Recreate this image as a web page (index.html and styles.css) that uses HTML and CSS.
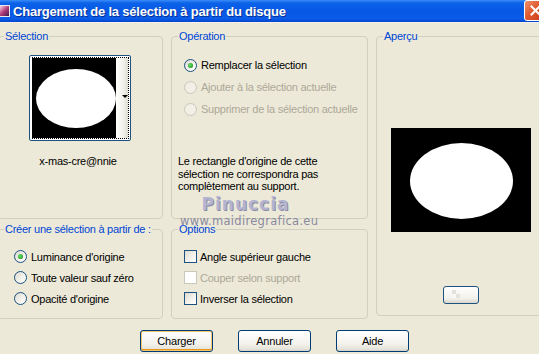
FILE: index.html
```html
<!DOCTYPE html>
<html lang="fr">
<head>
<meta charset="UTF-8">
<title>Chargement de la sélection à partir du disque</title>
<link rel="stylesheet" href="styles.css">
</head>
<body>

<div class="window">
<div class="titlebar">
<span class="app-icon"></span>
<span class="title">Chargement de la sélection à partir du disque</span>
<span class="close-btn">
<svg width="11" height="11" viewBox="0 0 11 11"><path d="M1.5 1.5 L9.5 9.5 M9.5 1.5 L1.5 9.5" stroke="#fff" stroke-width="2" stroke-linecap="square"/></svg>
</span>
</div>

<div class="body">
<div class="groups">

<fieldset class="group sel-group">
<legend>Sélection</legend>
<div class="thumb">
<div class="thumb-img"><div class="ellipse small"></div></div>
<div class="thumb-strip"><span class="arrow"></span></div>
</div>
<div class="thumb-name">x-mas-cre@nnie</div>
</fieldset>

<fieldset class="group op-group">
<legend>Opération</legend>
<div class="radio-list wide">
<label class="radio checked"><span class="dot"></span>Remplacer la sélection</label>
<label class="radio disabled"><span class="dot"></span>Ajouter à la sélection actuelle</label>
<label class="radio disabled"><span class="dot"></span>Supprimer de la sélection actuelle</label>
</div>
<p class="note">Le rectangle d'origine de cette<br>sélection ne correspondra pas<br>complètement au support.</p>
</fieldset>

<fieldset class="group prev-group">
<legend>Aperçu</legend>
<div class="preview"><div class="ellipse big"></div></div>
<div class="mini-btn"></div>
</fieldset>

<fieldset class="group src-group">
<legend>Créer une sélection à partir de :</legend>
<div class="radio-list">
<label class="radio checked"><span class="dot"></span>Luminance d'origine</label>
<label class="radio"><span class="dot"></span>Toute valeur sauf zéro</label>
<label class="radio"><span class="dot"></span>Opacité d'origine</label>
</div>
</fieldset>

<fieldset class="group opt-group">
<legend>Options</legend>
<div class="radio-list">
<label class="check"><span class="box"></span>Angle supérieur gauche</label>
<label class="check disabled"><span class="box"></span>Couper selon support</label>
<label class="check"><span class="box"></span>Inverser la sélection</label>
</div>
</fieldset>

</div>

<div class="buttons">
<button class="btn default">Charger</button>
<button class="btn">Annuler</button>
<button class="btn">Aide</button>
</div>
</div>

<div class="watermark">
<div class="wm-name">Pinuccia</div>
<div class="wm-url">www.maidiregrafica.eu</div>
</div>
</div>

</body>
</html>
```

FILE: styles.css
```css
body {
    margin: 0;
    padding: 0;
    background-color: #ece9d8;
    font-family: "Liberation Sans", Arial, sans-serif;
    font-size: 11px;
    letter-spacing: -0.25px;
    color: #000;
}

.window {
    position: relative;
    width: 539px;
    height: 354px;
    overflow: hidden;
    background-color: #ece9d8;
}

/* title bar */
.titlebar {
    height: 22px;
    display: flex;
    align-items: center;
    background: linear-gradient(#3a8cf7 0, #0c62e8 3px, #0658e5 50%, #0a5ce9 85%, #0444cc 100%);
    border-bottom: 1px solid #f4f2e8;
    position: relative;
}

.app-icon {
    width: 9px;
    height: 10px;
    margin-left: -1px;
    background: linear-gradient(135deg, #f6d4e8 0, #b03a7a 50%, #3a2050 100%);
    border: 1px solid #e8e8f0;
}

.title {
    margin-left: 3px;
    color: #fff;
    font-weight: bold;
    font-size: 13px;
    letter-spacing: -0.2px;
    text-shadow: 1px 1px 0 #0a2f90;
}

.close-btn {
    position: absolute;
    left: 524px;
    top: 0;
    width: 20px;
    height: 19px;
    border: 1px solid #fff;
    border-radius: 3px;
    background: linear-gradient(135deg, #f0906c 0, #e05a30 45%, #c83a18 100%);
    display: flex;
    align-items: center;
    justify-content: center;
}

/* body */
.body {
    padding-top: 7px;
}

.groups {
    display: grid;
    grid-template-columns: 166px 197px 170px;
    grid-template-rows: 189px 96px;
    column-gap: 8px;
    row-gap: 4px;
    margin-left: -3px;
}

.group {
    margin: 0;
    padding: 0;
    min-width: 0;
    border: 1px solid #d0d0bf;
    border-radius: 4px;
    box-sizing: border-box;
}

.group legend {
    color: #0046d5;
    line-height: 13px;
    padding: 0 1px;
    margin-left: 6px;
}

.sel-group {
    display: flex;
    flex-direction: column;
    align-items: center;
}

.prev-group {
    grid-row: 1 / span 2;
    grid-column: 3;
    height: 286px;
    display: flex;
    flex-direction: column;
    align-items: center;
}

.src-group {
    grid-row: 2;
    grid-column: 1;
}

.opt-group {
    grid-row: 2;
    grid-column: 2;
}

/* selection thumbnail */
.thumb {
    position: relative;
    margin-top: 12px;
    display: flex;
    padding: 2px;
    background-color: #fff;
    border: 1px solid #1c5180;
    border-radius: 2px;
}

.thumb::after {
    content: "";
    position: absolute;
    left: 2px;
    top: 1px;
    right: 1px;
    bottom: 1px;
    border: 1px dotted #000;
}

.thumb-img {
    width: 84px;
    height: 80px;
    background-color: #000;
    display: flex;
    align-items: center;
    padding-left: 4px;
    box-sizing: border-box;
    overflow: hidden;
}

.thumb-strip {
    width: 12px;
    height: 80px;
    background: linear-gradient(90deg, #fff 0, #f2f1ea 60%, #dedcd2 100%);
    position: relative;
}

.arrow {
    position: absolute;
    left: 6px;
    top: 37px;
    border-left: 3px solid transparent;
    border-right: 3px solid transparent;
    border-top: 3px solid #000;
}

.ellipse {
    background-color: #fff;
    border-radius: 50%;
    flex: none;
}

.ellipse.small {
    width: 80px;
    height: 59px;
}

.thumb-name {
    margin-top: 14px;
    line-height: 13px;
    margin-right: 4px;
}

/* radios and checkboxes */
.radio-list {
    display: flex;
    flex-direction: column;
    padding: 10px 0 0 16px;
}

.radio-list.wide {
    padding-top: 11px;
    padding-left: 12px;
}

.op-group .radio {
    height: 22px;
}

.radio, .check {
    display: flex;
    align-items: center;
    height: 21px;
    white-space: nowrap;
}

.radio .dot {
    width: 11px;
    height: 11px;
    border: 1px solid #1c5180;
    border-radius: 50%;
    background: linear-gradient(135deg, #dcdad0 0, #f4f3ee 60%, #fff 100%);
    margin-right: 4px;
    display: flex;
    align-items: center;
    justify-content: center;
}

.radio.checked .dot::after {
    content: "";
    width: 5px;
    height: 5px;
    border-radius: 50%;
    background: radial-gradient(circle at 40% 40%, #6ee06e 0, #21a121 70%);
}

.radio.disabled, .check.disabled {
    color: #aca899;
}

.radio.disabled .dot {
    border-color: #cac8bb;
    background: #f2f0e6;
}

.check .box {
    width: 11px;
    height: 11px;
    border: 1px solid #1c5180;
    background: linear-gradient(135deg, #dcdad0 0, #f4f3ee 60%, #fff 100%);
    margin-right: 3px;
}

.opt-group .radio-list {
    padding-left: 12px;
}

.check.disabled .box {
    border-color: #cac8bb;
    background: #fff;
}

.note {
    margin: 35px 0 0 6px;
    line-height: 12.5px;
}

/* preview */
.preview {
    margin-top: 85px;
    width: 140px;
    height: 104px;
    background-color: #000;
    display: flex;
    align-items: center;
    justify-content: center;
}

.ellipse.big {
    width: 103px;
    height: 76px;
    margin-left: 1px;
    margin-top: 1px;
}

.mini-btn {
    margin-top: 54px;
    width: 34px;
    height: 16px;
    border: 1px solid #1c5180;
    border-radius: 3px;
    background:
        repeating-conic-gradient(#f8f8f4 0 25%, #e4e2da 0 50%) 8px 3px / 8px 8px no-repeat,
        linear-gradient(#fff 0, #f2f1ec 70%, #d8d6cc 100%);
}

/* buttons */
.buttons {
    display: flex;
    gap: 25px;
    padding-left: 140px;
    margin-top: 11px;
}

.btn {
    width: 73px;
    height: 22px;
    padding: 0;
    font-family: "Liberation Sans", Arial, sans-serif;
    font-size: 11px;
    letter-spacing: -0.2px;
    color: #000;
    border: 1px solid #003c74;
    border-radius: 3px;
    background: linear-gradient(#fff 0, #f4f3ee 60%, #e6e4da 90%, #d6d0c5 100%);
}

.btn.default {
    box-shadow: inset 0 0 0 1px #f6c66a, inset 0 -1px 0 1px #e5971f;
}

/* watermark */
.watermark {
    position: absolute;
    left: 176px;
    top: 193px;
    width: 135px;
    text-align: center;
    font-family: "DejaVu Sans", sans-serif;
    letter-spacing: 0;
    pointer-events: none;
}

.wm-name {
    font-size: 17px;
    font-weight: bold;
    letter-spacing: 1px;
    color: #b4b4d0;
    text-shadow: 1px 1px 0 #8a8aa4;
    line-height: 22px;
    margin-left: 4px;
}

.wm-url {
    font-size: 11.5px;
    letter-spacing: 0.3px;
    color: #8a8aa0;
    line-height: 12px;
    text-align: left;
    margin-left: 4px;
}
```
